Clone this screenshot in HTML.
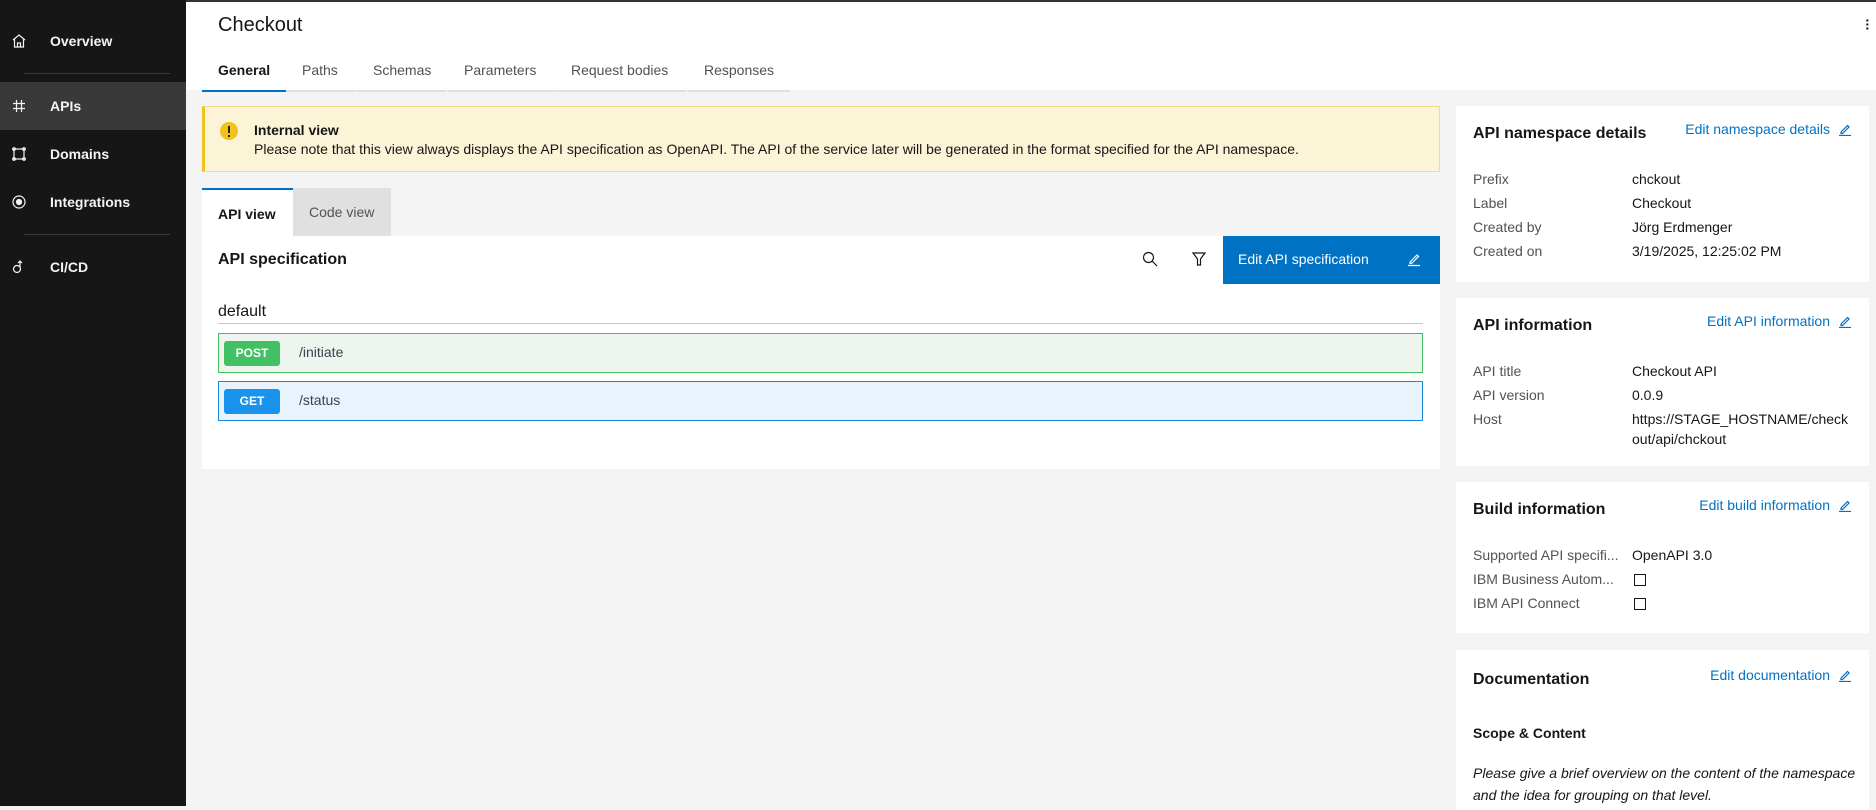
<!DOCTYPE html>
<html><head><meta charset="utf-8"><style>
*{box-sizing:border-box;margin:0;padding:0}
body{width:1876px;height:806px;overflow:hidden;background:#f4f4f4;font-family:"Liberation Sans",sans-serif;color:#161616;position:relative;font-size:14px}
.a{position:absolute;white-space:nowrap}
#side{position:absolute;left:0;top:0;width:186px;height:806px;background:#161616;color:#f4f4f4}
#side .it{position:absolute;left:0;width:186px;height:48px;line-height:48px;font-weight:bold;font-size:14px}
#side .it span{position:absolute;left:50px}
#side svg{position:absolute;left:11px;top:16px}
.div{position:absolute;left:24px;width:146px;height:1px;background:#393939}
#top{position:absolute;left:186px;top:0;right:0;height:90px;background:#fff;border-top:2px solid #333}
.tab{position:absolute;top:60px;height:30px;font-size:14px;color:#525252;border-bottom:2px solid #e0e0e0;padding-left:16px}
.card{position:absolute;left:1456px;width:413px;background:#fff}
.ct{position:absolute;left:17px;font-weight:bold;font-size:16px}
.ed{position:absolute;right:17px;color:#0f62fe;color:#0072c3;font-size:14px}
.lb{position:absolute;left:17px;color:#525252}
.vl{position:absolute;left:176px}
.pen{display:inline-block;vertical-align:-2px;margin-left:8px}
</style></head><body>
<div id="side">
 <div class="it" style="top:17px"><svg width="16" height="16" viewBox="0 0 16 16" fill="none" stroke="#f4f4f4" stroke-width="1.2"><path d="M2 7L8 2L14 7M3.5 6v8h9V6M6.5 14V10h3v4"/></svg><span>Overview</span></div>
 <div class="div" style="top:73px"></div>
 <div class="it" style="top:82px;background:#393939"><svg width="16" height="16" viewBox="0 0 16 16" fill="none" stroke="#f4f4f4" stroke-width="1.2"><path d="M5.5 2v12M10.5 2v12M2 5.5h12M2 10.5h12"/></svg><span>APIs</span></div>
 <div class="it" style="top:130px"><svg width="16" height="16" viewBox="0 0 16 16" fill="none" stroke="#f4f4f4" stroke-width="1.2"><rect x="3" y="3" width="10" height="10"/><circle cx="3" cy="3" r="1.3"/><circle cx="13" cy="3" r="1.3"/><circle cx="3" cy="13" r="1.3"/><circle cx="13" cy="13" r="1.3"/></svg><span>Domains</span></div>
 <div class="it" style="top:178px"><svg width="16" height="16" viewBox="0 0 16 16" fill="none" stroke="#f4f4f4" stroke-width="1.2"><circle cx="8" cy="8" r="6"/><circle cx="8" cy="8" r="2.5" fill="#f4f4f4"/></svg><span>Integrations</span></div>
 <div class="div" style="top:234px"></div>
 <div class="it" style="top:243px"><svg width="16" height="16" viewBox="0 0 16 16" fill="none" stroke="#f4f4f4" stroke-width="1.2"><circle cx="6" cy="10" r="3.5"/><path d="M9 8V2M7 4l2-2 2 2"/></svg><span>CI/CD</span></div>
</div>
<div id="top">
 <div class="a" style="left:32px;top:12px;font-size:20px">Checkout</div>
 <div class="a" style="right:6px;top:16px;font-size:14px;font-weight:bold;line-height:4px">·<br>·<br>·</div>
 <div class="tab" style="left:16px;width:84px;color:#161616;font-weight:bold;border-bottom-color:#0072c3">General</div>
 <div class="tab" style="left:100px;width:70px">Paths</div>
 <div class="tab" style="left:171px;width:90px">Schemas</div>
 <div class="tab" style="left:262px;width:106px">Parameters</div>
 <div class="tab" style="left:369px;width:132px">Request bodies</div>
 <div class="tab" style="left:502px;width:102px">Responses</div>
</div>
<div class="a" style="left:202px;top:106px;width:1238px;height:66px;background:#fcf4d6;border:1px solid #f1dc8a;border-left:3px solid #f1c21b"></div>
<svg class="a" style="left:219px;top:121px" width="20" height="20"><circle cx="10" cy="10" r="9" fill="#f1c21b"/><path d="M10 5v7" stroke="#161616" stroke-width="1.8"/><circle cx="10" cy="15" r="1.1" fill="#161616"/></svg>
<div class="a" style="left:254px;top:122px;font-weight:bold">Internal view</div>
<div class="a" style="left:254px;top:141px">Please note that this view always displays the API specification as OpenAPI. The API of the service later will be generated in the format specified for the API namespace.</div>
<div class="a" style="left:202px;top:188px;width:91px;height:48px;background:#fff;border-top:2px solid #0072c3;font-weight:bold;padding:16px 0 0 16px">API view</div>
<div class="a" style="left:293px;top:188px;width:98px;height:48px;background:#e0e0e0;color:#525252;padding:16px 0 0 16px">Code view</div>
<div class="a" style="left:202px;top:236px;width:1238px;height:233px;background:#fff"></div>
<div class="a" style="left:218px;top:251px;font-size:16px;font-weight:bold">API specification</div>
<svg class="a" style="left:1142px;top:251px" width="16" height="16" fill="none" stroke="#161616" stroke-width="1.2"><circle cx="6.5" cy="6.5" r="5"/><path d="M10 10l5 5"/></svg>
<svg class="a" style="left:1191px;top:251px" width="16" height="16" fill="none" stroke="#161616" stroke-width="1.2"><path d="M2 2h12L9.5 8v6h-3V8z"/></svg>
<div class="a" style="left:1223px;top:236px;width:217px;height:48px;background:#0072c3;color:#fff;padding:15px 0 0 15px">Edit API specification</div>
<svg class="a" style="left:1406px;top:251px" width="16" height="16" fill="none" stroke="#fff" stroke-width="1.2"><path d="M4 11l7-7 1.5 1.5-7 7H4zM2 14.5h12"/></svg>
<div class="a" style="left:218px;top:303px;font-size:16px">default</div>
<div class="a" style="left:218px;top:323px;width:1205px;height:1px;background:#c6c6c6"></div>
<div class="a" style="left:218px;top:333px;width:1205px;height:40px;background:#edf6ee;border:1px solid #49cc90;border-color:#45be62"></div>
<div class="a" style="left:224px;top:341px;width:56px;height:25px;background:#43c063;color:#fff;border-radius:3px;font-size:12px;font-weight:bold;text-align:center;line-height:25px">POST</div>
<div class="a" style="left:299px;top:344px;color:#3b4151">/initiate</div>
<div class="a" style="left:218px;top:381px;width:1205px;height:40px;background:#e8f3fd;border:1px solid #1b86d6"></div>
<div class="a" style="left:224px;top:389px;width:56px;height:25px;background:#1a93ec;color:#fff;border-radius:3px;font-size:12px;font-weight:bold;text-align:center;line-height:25px">GET</div>
<div class="a" style="left:299px;top:392px;color:#3b4151">/status</div>

<div class="card" style="top:106px;height:176px">
 <div class="ct" style="top:19px">API namespace details</div>
 <div class="ed" style="top:15px">Edit namespace details<svg class="pen" width="14" height="14" fill="none" stroke="#0072c3" stroke-width="1.2"><path d="M3 10l6.5-6.5 1.5 1.5L4.5 11.5H3zM1 13.5h12"/></svg></div>
 <div class="lb" style="top:65px">Prefix</div><div class="vl" style="top:65px">chckout</div>
 <div class="lb" style="top:89px">Label</div><div class="vl" style="top:89px">Checkout</div>
 <div class="lb" style="top:113px">Created by</div><div class="vl" style="top:113px">Jörg Erdmenger</div>
 <div class="lb" style="top:137px">Created on</div><div class="vl" style="top:137px">3/19/2025, 12:25:02 PM</div>
</div>
<div class="card" style="top:298px;height:168px">
 <div class="ct" style="top:19px">API information</div>
 <div class="ed" style="top:15px">Edit API information<svg class="pen" width="14" height="14" fill="none" stroke="#0072c3" stroke-width="1.2"><path d="M3 10l6.5-6.5 1.5 1.5L4.5 11.5H3zM1 13.5h12"/></svg></div>
 <div class="lb" style="top:65px">API title</div><div class="vl" style="top:65px">Checkout API</div>
 <div class="lb" style="top:89px">API version</div><div class="vl" style="top:89px">0.0.9</div>
 <div class="lb" style="top:113px">Host</div><div class="vl" style="top:113px;line-height:20px;top:111px">https://STAGE_HOSTNAME/check<br>out/api/chckout</div>
</div>
<div class="card" style="top:482px;height:151px">
 <div class="ct" style="top:19px">Build information</div>
 <div class="ed" style="top:15px">Edit build information<svg class="pen" width="14" height="14" fill="none" stroke="#0072c3" stroke-width="1.2"><path d="M3 10l6.5-6.5 1.5 1.5L4.5 11.5H3zM1 13.5h12"/></svg></div>
 <div class="lb" style="top:65px">Supported API specifi...</div><div class="vl" style="top:65px;left:176px">OpenAPI 3.0</div>
 <div class="lb" style="top:89px">IBM Business Autom...</div><div class="a" style="left:178px;top:92px;width:12px;height:12px;border:1px solid #161616"></div>
 <div class="lb" style="top:113px">IBM API Connect</div><div class="a" style="left:178px;top:116px;width:12px;height:12px;border:1px solid #161616"></div>
</div>
<div class="card" style="top:650px;height:160px">
 <div class="ct" style="top:21px">Documentation</div>
 <div class="ed" style="top:17px">Edit documentation<svg class="pen" width="14" height="14" fill="none" stroke="#0072c3" stroke-width="1.2"><path d="M3 10l6.5-6.5 1.5 1.5L4.5 11.5H3zM1 13.5h12"/></svg></div>
 <div class="a" style="left:17px;top:75px;font-weight:bold">Scope &amp; Content</div>
 <div class="a" style="left:17px;top:112px;font-style:italic;line-height:22px">Please give a brief overview on the content of the namespace<br>and the idea for grouping on that level.</div>
</div>
</body></html>
